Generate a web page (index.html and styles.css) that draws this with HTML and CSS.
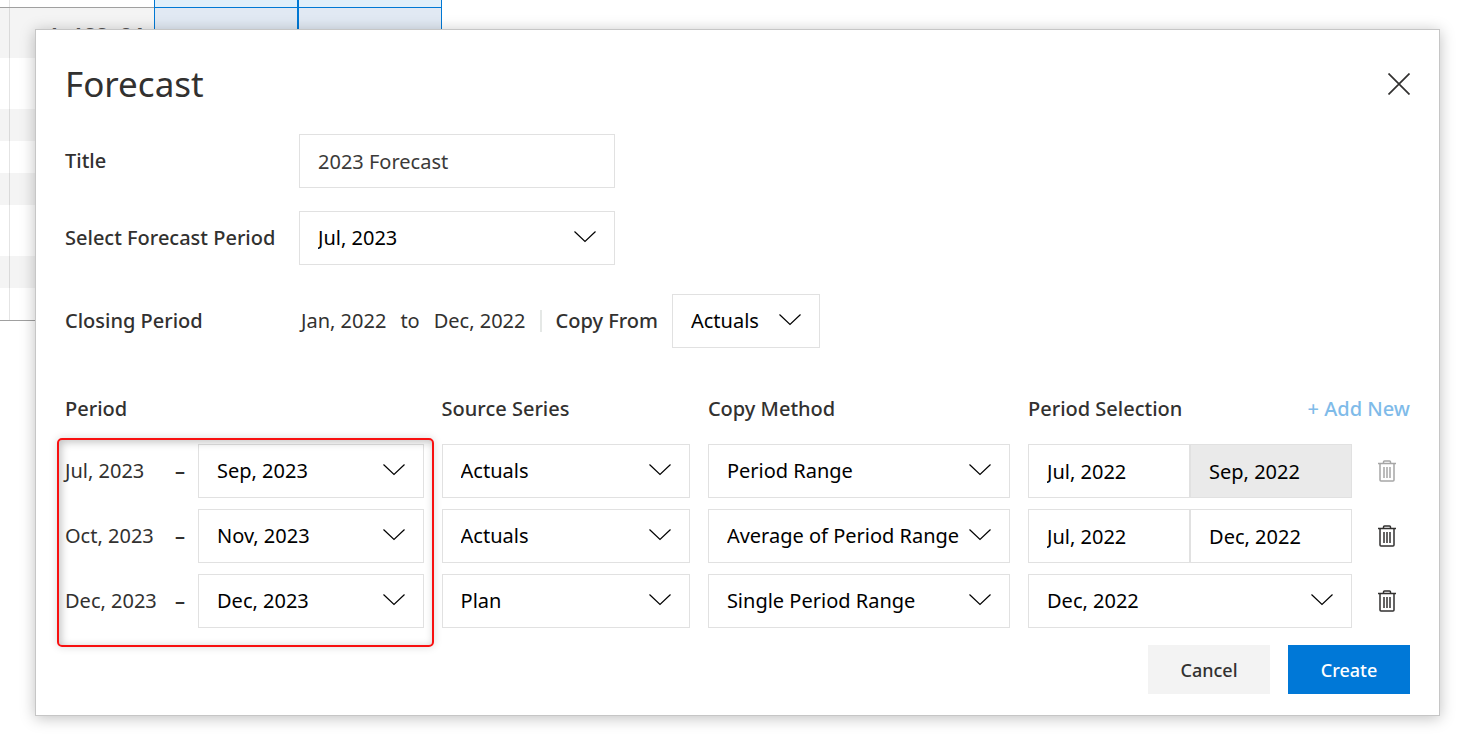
FILE: index.html
```html
<!DOCTYPE html>
<html lang="en">
<head>
<meta charset="utf-8">
<title>Forecast</title>
<link rel="stylesheet" href="styles.css">
</head>
<body>
<svg class="defs" aria-hidden="true">
  <symbol id="chevron" viewBox="0 0 22 12"><path d="M.5 .5 11 10.500 21.500 .5" fill="none" stroke="currentColor" stroke-width="1.200"/></symbol>
  <symbol id="trash" viewBox="0 0 18 22"><path d="M0 3.500h18M5.500 3.500v-1.500q0-1 1-1h5q1 0 1 1v1.500M2 3.500v16.500q0 1 1 1h12q1 0 1-1v-16.500M6 7v11M9 7v11M12 7v11" fill="none" stroke="currentColor" stroke-width="1.500"/></symbol>
</svg>

<div class="sheet" aria-hidden="true">
  <div class="sheet-row head"><span class="cell"></span><span class="cell picked"></span><span class="cell picked"></span></div>
  <div class="sheet-row total shaded"><span class="cell">1,188.24</span><span class="cell picked"></span><span class="cell picked"></span></div>
  <div class="sheet-row tall"></div>
  <div class="sheet-row shaded"></div>
  <div class="sheet-row"></div>
  <div class="sheet-row shaded"></div>
  <div class="sheet-row tall"></div>
  <div class="sheet-row shaded"></div>
  <div class="sheet-row last"></div>
</div>

<form class="dialog" role="dialog" aria-labelledby="dialog-title">
  <header class="dialog-head">
    <h1 id="dialog-title">Forecast</h1>
    <button class="close" type="button" aria-label="Close"><svg viewBox="0 0 22 22"><path d="M.5 .5 21.500 21.500M21.500 .5 .5 21.500" stroke="currentColor" stroke-width="1.700"/></svg></button>
  </header>

  <div class="field">
    <label for="title">Title</label>
    <input class="control wide muted" id="title" type="text" value="2023 Forecast">
  </div>
  <div class="field">
    <label for="forecast-period">Select Forecast Period</label>
    <span class="pick wide"><select class="control" id="forecast-period"><option>Jul, 2023</option></select><svg><use href="#chevron"/></svg></span>
  </div>
  <div class="field closing">
    <span class="label">Closing Period</span>
    <div class="range">
      <span>Jan, 2022</span><span>to</span><span>Dec, 2022</span>
      <span class="rule"></span>
      <label for="copy-from">Copy From</label>
      <span class="pick small"><select class="control" id="copy-from"><option>Actuals</option></select><svg><use href="#chevron"/></svg></span>
    </div>
  </div>

  <table class="periods">
    <colgroup><col class="c-period"><col class="c-source"><col class="c-method"><col class="c-selection"><col></colgroup>
    <thead>
      <tr>
        <th scope="col">Period</th><th scope="col">Source Series</th><th scope="col">Copy Method</th>
        <th scope="col" colspan="2"><div class="last-head"><span>Period Selection</span><button class="add" type="button">+ Add New</button></div></th>
      </tr>
    </thead>
    <tbody>
      <tr>
        <td class="marked"><div class="span"><span>Jul, 2023</span><span class="dash">–</span><span class="pick"><select class="control" aria-label="End period"><option>Sep, 2023</option></select><svg><use href="#chevron"/></svg></span></div></td>
        <td><span class="pick"><select class="control" aria-label="Source series"><option>Actuals</option></select><svg><use href="#chevron"/></svg></span></td>
        <td><span class="pick"><select class="control" aria-label="Copy method"><option>Period Range</option></select><svg><use href="#chevron"/></svg></span></td>
        <td><div class="pair"><input class="control" type="text" aria-label="From" value="Jul, 2022"><input class="control" type="text" aria-label="To" value="Sep, 2022" disabled></div></td>
        <td><button class="trash" type="button" aria-label="Delete" disabled><svg><use href="#trash"/></svg></button></td>
      </tr>
      <tr>
        <td><div class="span"><span>Oct, 2023</span><span class="dash">–</span><span class="pick"><select class="control" aria-label="End period"><option>Nov, 2023</option></select><svg><use href="#chevron"/></svg></span></div></td>
        <td><span class="pick"><select class="control" aria-label="Source series"><option>Actuals</option></select><svg><use href="#chevron"/></svg></span></td>
        <td><span class="pick"><select class="control" aria-label="Copy method"><option>Average of Period Range</option></select><svg><use href="#chevron"/></svg></span></td>
        <td><div class="pair"><input class="control" type="text" aria-label="From" value="Jul, 2022"><input class="control" type="text" aria-label="To" value="Dec, 2022"></div></td>
        <td><button class="trash" type="button" aria-label="Delete"><svg><use href="#trash"/></svg></button></td>
      </tr>
      <tr>
        <td><div class="span"><span>Dec, 2023</span><span class="dash">–</span><span class="pick"><select class="control" aria-label="End period"><option>Dec, 2023</option></select><svg><use href="#chevron"/></svg></span></div></td>
        <td><span class="pick"><select class="control" aria-label="Source series"><option>Plan</option></select><svg><use href="#chevron"/></svg></span></td>
        <td><span class="pick"><select class="control" aria-label="Copy method"><option>Single Period Range</option></select><svg><use href="#chevron"/></svg></span></td>
        <td><span class="pick"><select class="control" aria-label="Period"><option>Dec, 2022</option></select><svg><use href="#chevron"/></svg></span></td>
        <td><button class="trash" type="button" aria-label="Delete"><svg><use href="#trash"/></svg></button></td>
      </tr>
    </tbody>
  </table>

  <footer class="actions">
    <button class="btn" type="button">Cancel</button>
    <button class="btn primary" type="submit">Create</button>
  </footer>
</form>
</body>
</html>
```
FILE: styles.css
```css
*, ::after { box-sizing: border-box; }

body {
  margin: 0;
  padding: 29px 38px 22px 35px;
  background: #fff;
  color: #323130;
  font-family: "Noto Sans", "Open Sans", sans-serif;
  font-size: 20px;
  line-height: 28px;
}

.defs { position: absolute; width: 0; height: 0; }

/* Spreadsheet behind the dialog */
.sheet {
  position: absolute;
  top: 0;
  left: 0;
  width: 442px;
  z-index: -1;
  background: linear-gradient(#e4e4e4, #e4e4e4) 9px 0 / 1px 100% no-repeat;
}
.sheet-row { display: grid; grid-template-columns: 154px 144px 144px; height: 32px; }
.sheet-row.head { height: 8px; border-bottom: 1px solid #a0a0a0; }
.sheet-row.total { height: 50px; }
.sheet-row.tall { height: 51px; }
.sheet-row.last { height: 33px; border-bottom: 1px solid #a0a0a0; }
.sheet-row.shaded { background: rgba(0, 0, 0, .045); }
.cell {
  padding: 14px 10px 0 0;
  text-align: right;
  color: #555;
  font: bold 20px/28px "Liberation Mono", monospace;
}
.head .cell { padding: 0; }
.cell.picked { border: solid #0078d4; border-width: 0 1px; background: #e1e9f3; }
.head .picked { height: 8px; border-bottom-width: 1px; background: #e0effa; }

/* Dialog */
.dialog {
  padding: 28px 29px 21px;
  border: 1px solid #c6c6c6;
  background: #fff;
  box-shadow: 0 2px 14px rgba(0, 0, 0, .25);
}
.dialog-head { display: flex; align-items: center; justify-content: space-between; margin-bottom: 24px; }
h1 { margin: 0; font-size: 35px; line-height: 52px; font-weight: 400; }
button { font: inherit; color: inherit; border: 0; padding: 0; background: none; cursor: pointer; }
.close { display: grid; width: 22px; height: 22px; }

.field { display: grid; grid-template-columns: 234px 1fr; align-items: center; margin-bottom: 23px; }
.field label, .label, th { font-weight: 500; }
.field.closing { margin: 29px 0 47px; }
.wide { width: 316px; }
.small { width: 148px; }
.range { display: flex; align-items: center; gap: 14px; padding-left: 2px; }
.rule { width: 2px; height: 22px; background: #e5e8e6; }

.control {
  width: 100%;
  height: 54px;
  margin: 0;
  padding: 0 18px;
  border: 1px solid #e1e1e1;
  border-radius: 0;
  background: #fff;
  color: #000;
  font: inherit;
  appearance: none;
}
.control.wide { width: 316px; }
.control.muted { color: #3b3a39; }
.control:disabled { background: #eaeaea; opacity: 1; }
.pick { display: grid; align-items: center; }
.pick > * { grid-area: 1 / 1; }
.pick svg { width: 22px; height: 12px; margin: 0 19px 2px 0; justify-self: end; color: #000; pointer-events: none; }

.periods { width: 100%; table-layout: fixed; border-collapse: collapse; }
.c-period { width: 28%; }
.c-source { width: 19.8%; }
.c-method { width: 23.8%; }
.c-selection { width: 24.1%; }
th { padding: 0 0 21px; text-align: left; }
td { padding: 0 18px 11px 0; }
td:nth-child(4), td:last-child { padding-right: 0; }
.last-head { display: flex; justify-content: space-between; }
.add { color: #7fbbe9; font-weight: 500; }
.span { display: grid; grid-template-columns: 110px 23px 1fr; align-items: center; }
.dash { font-weight: 600; }
.pair { display: grid; grid-template-columns: 1fr 1fr; }
.trash { display: grid; width: 18px; height: 22px; margin-left: 26px; }
.trash svg { width: 18px; height: 22px; }
.trash:disabled { color: #a6a6a6; }

/* Callout frame over the period column */
.marked { position: relative; }
.marked::after {
  content: "";
  position: absolute;
  z-index: 1;
  inset: -6px 8px auto -8px;
  height: 209px;
  border: 2px solid #f81010;
  border-radius: 5px;
  box-shadow: 0 0 8px rgba(0, 0, 0, .15), inset 2px 2px 8px rgba(0, 0, 0, .25);
  pointer-events: none;
}

.actions { display: flex; justify-content: flex-end; gap: 18px; padding-top: 6px; }
.btn { width: 122px; height: 49px; background: #f3f3f3; font-size: 18px; font-weight: 500; }
.btn.primary { background: #0078d7; color: #fff; }
```
